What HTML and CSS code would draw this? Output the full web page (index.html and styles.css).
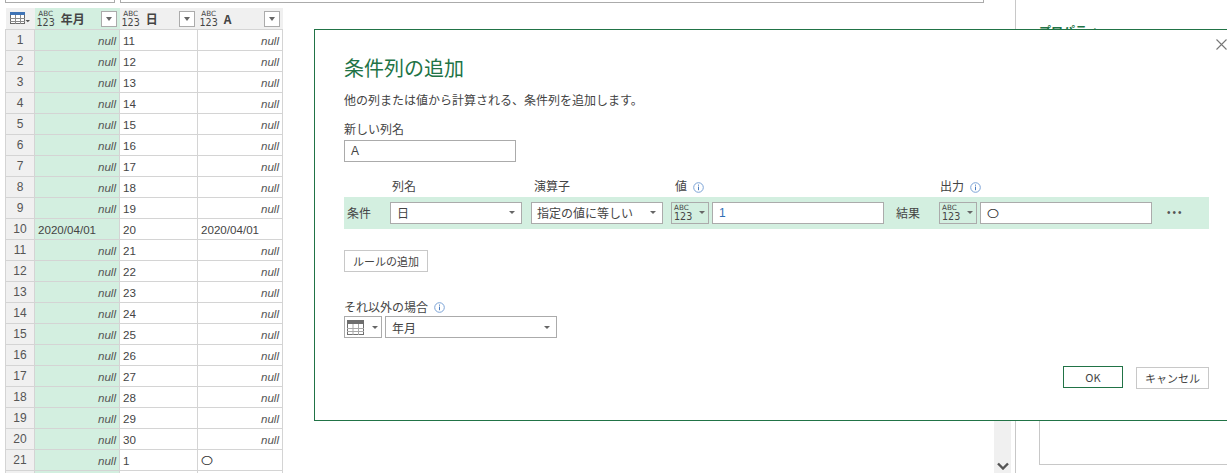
FILE: index.html
```html
<!DOCTYPE html>
<html lang="ja">
<head>
<meta charset="utf-8">
<title>条件列の追加</title>
<link rel="stylesheet" href="styles.css">
</head>
<body>
<div class="app">
  <main class="main">
    <div class="topbar"><div class="box name"></div><div class="box formula"></div></div>
    <div class="content">
      <table class="grid">
        <thead>
          <tr>
            <th class="corner"><svg width="20" height="12" viewBox="0 0 20 12"><rect x="0.5" y="0.5" width="14" height="11" fill="#fff" stroke="#6a6a6a"/><rect x="0" y="0" width="15" height="3" fill="#3f73b5"/><path d="M0 6.5h15M0 9.5h15M5.5 3v9M10.5 3v9" stroke="#8a8a8a" fill="none"/><path d="M15.5 8h4.5l-2.2 2.2z" fill="#555"/></svg></th>
            <th class="c1"><div class="head"><span class="type"><b>ABC</b><b>123</b></span><span class="hname">年月</span><span class="filter"><i></i></span></div></th>
            <th class="c2"><div class="head"><span class="type"><b>ABC</b><b>123</b></span><span class="hname">日</span><span class="filter"><i></i></span></div></th>
            <th class="c3"><div class="head"><span class="type"><b>ABC</b><b>123</b></span><span class="hname">A</span><span class="filter"><i></i></span></div></th>
          </tr>
        </thead>
        <tbody>
          <tr><th>1</th><td class="g n">null</td><td>11</td><td class="n">null</td></tr>
          <tr><th>2</th><td class="g n">null</td><td>12</td><td class="n">null</td></tr>
          <tr><th>3</th><td class="g n">null</td><td>13</td><td class="n">null</td></tr>
          <tr><th>4</th><td class="g n">null</td><td>14</td><td class="n">null</td></tr>
          <tr><th>5</th><td class="g n">null</td><td>15</td><td class="n">null</td></tr>
          <tr><th>6</th><td class="g n">null</td><td>16</td><td class="n">null</td></tr>
          <tr><th>7</th><td class="g n">null</td><td>17</td><td class="n">null</td></tr>
          <tr><th>8</th><td class="g n">null</td><td>18</td><td class="n">null</td></tr>
          <tr><th>9</th><td class="g n">null</td><td>19</td><td class="n">null</td></tr>
          <tr><th>10</th><td class="g">2020/04/01</td><td>20</td><td>2020/04/01</td></tr>
          <tr><th>11</th><td class="g n">null</td><td>21</td><td class="n">null</td></tr>
          <tr><th>12</th><td class="g n">null</td><td>22</td><td class="n">null</td></tr>
          <tr><th>13</th><td class="g n">null</td><td>23</td><td class="n">null</td></tr>
          <tr><th>14</th><td class="g n">null</td><td>24</td><td class="n">null</td></tr>
          <tr><th>15</th><td class="g n">null</td><td>25</td><td class="n">null</td></tr>
          <tr><th>16</th><td class="g n">null</td><td>26</td><td class="n">null</td></tr>
          <tr><th>17</th><td class="g n">null</td><td>27</td><td class="n">null</td></tr>
          <tr><th>18</th><td class="g n">null</td><td>28</td><td class="n">null</td></tr>
          <tr><th>19</th><td class="g n">null</td><td>29</td><td class="n">null</td></tr>
          <tr><th>20</th><td class="g n">null</td><td>30</td><td class="n">null</td></tr>
          <tr><th>21</th><td class="g n">null</td><td>1</td><td><span class="oval">〇</span></td></tr>
          <tr><th></th><td class="g"></td><td></td><td></td></tr>
        </tbody>
      </table>
      <div class="scroll"><svg width="12" height="8" viewBox="0 0 12 8"><path d="M1 1.5l5 5 5-5" fill="none" stroke="#555" stroke-width="2.4"/></svg></div>
    </div>
  </main>
  <aside class="pane">
    <div class="panetitle">プロパティ</div>
    <div class="panebox"></div>
  </aside>
</div>

<section class="dialog">
  <svg class="close" width="11" height="11" viewBox="0 0 11 11"><path d="M.5.5l10 10M10.5.5l-10 10" stroke="#777" stroke-width="1.1" fill="none"/></svg>
  <h1>条件列の追加</h1>
  <p class="desc">他の列または値から計算される、条件列を追加します。</p>
  <label class="lbl">新しい列名</label>
  <div class="field newname"><span class="accent">A</span></div>
  <div class="rulehead">
    <span class="h-col">列名</span>
    <span class="h-op">演算子</span>
    <span class="h-val">値<svg class="info" width="11" height="11" viewBox="0 0 11 11"><circle cx="5.5" cy="5.5" r="4.8" fill="none" stroke="#7ba3d6"/><path d="M5.5 4.6v3.6M5.5 2.6v1.1" stroke="#4a7cbf" fill="none"/></svg></span>
    <span class="h-out">出力<svg class="info" width="11" height="11" viewBox="0 0 11 11"><circle cx="5.5" cy="5.5" r="4.8" fill="none" stroke="#7ba3d6"/><path d="M5.5 4.6v3.6M5.5 2.6v1.1" stroke="#4a7cbf" fill="none"/></svg></span>
  </div>
  <div class="rule">
    <span class="cond">条件</span>
    <div class="field sel colsel">日<i class="arrow"></i></div>
    <div class="field sel opsel">指定の値に等しい<i class="arrow"></i></div>
    <div class="field typesel"><span class="type"><b>ABC</b><b>123</b></span><i class="arrow"></i></div>
    <div class="field val"><span class="blue">1</span></div>
    <span class="result">結果</span>
    <div class="field typesel"><span class="type"><b>ABC</b><b>123</b></span><i class="arrow"></i></div>
    <div class="field out"><span class="oval">〇</span></div>
    <span class="more">•••</span>
  </div>
  <button class="btn add" type="button">ルールの追加</button>
  <label class="lbl else">それ以外の場合<svg class="info" width="11" height="11" viewBox="0 0 11 11"><circle cx="5.5" cy="5.5" r="4.8" fill="none" stroke="#7ba3d6"/><path d="M5.5 4.6v3.6M5.5 2.6v1.1" stroke="#4a7cbf" fill="none"/></svg></label>
  <div class="elserow">
    <div class="field tablesel"><svg width="17" height="15" viewBox="0 0 17 15"><rect x="0.5" y="0.5" width="16" height="14" fill="#fff" stroke="#6e6e6e"/><rect x="0" y="0" width="17" height="4" fill="#6e6e6e"/><path d="M0 8.5h17M0 11.5h17M6 4v11M11.5 4v11" stroke="#a8a8a8" fill="none"/></svg><i class="arrow"></i></div>
    <div class="field sel elsesel">年月<i class="arrow"></i></div>
  </div>
  <div class="actions">
    <button class="btn ok" type="button">OK</button>
    <button class="btn cancel" type="button">キャンセル</button>
  </div>
</section>
</body>
</html>
```
FILE: styles.css
```css
* { box-sizing: border-box; }
html, body { margin: 0; height: 100%; overflow: hidden; background: #fff; }
body { font-family: "Noto Sans CJK JP", "Noto Sans", sans-serif; font-size: 12px; color: #444; }

.app { display: flex; width: 1227px; height: 473px; overflow: hidden; }
.main { width: 1016px; flex: none; border-right: 1px solid #c8c8c8; }
.topbar { display: flex; gap: 5px; height: 8px; padding-left: 5px; }
.box { height: 3px; border: 1px solid #ababab; border-top: 0; }
.name { width: 110px; }
.formula { width: 864px; }
.content { display: flex; height: 465px; }

.grid { border-collapse: collapse; table-layout: fixed; width: 277px; height: 462px; margin-left: 5px; flex: none; font-family: "Liberation Sans", "Noto Sans CJK JP", sans-serif; font-size: 11.6px; color: #444; }
.grid th, .grid td { height: 21px; padding: 0 3px; border: 1px solid #d4d4d4; overflow: hidden; white-space: nowrap; }
.grid thead th { height: 21px; background: #f0f0f0; border: 0; padding: 0; }
.grid tbody th { background: #f0f0f0; font-family: "Liberation Sans", sans-serif; font-size: 12px; font-weight: 400; color: #555; text-align: center; padding: 0; }
.corner { width: 29px; }
.c1 { width: 85px; }
.c2 { width: 78px; }
.c3 { width: 85px; }
.grid thead .c1 { background: #d3efe0; }
.g { background: #d3efe0; }
.n { text-align: right; font-style: italic; color: #555; }
.oval { display: inline-block; transform: scaleY(.72); font-family: "Noto Sans CJK JP", sans-serif; font-size: 12px; line-height: 12px; color: #333; }

.head { display: flex; align-items: center; height: 21px; padding: 0 1px 0 2px; }
.type { display: inline-flex; flex-direction: column; flex: none; line-height: 8.5px; font-family: "DejaVu Sans", sans-serif; color: #444; }
.type b { font-weight: 400; }
.type b:first-child { font-size: 7.2px; }
.type b:last-child { font-size: 9.6px; }
.hname { flex: 1; margin-left: 6px; text-align: left; font-family: "Noto Sans CJK JP", sans-serif; font-size: 12px; font-weight: 700; color: #444; }
.filter { display: flex; align-items: center; justify-content: center; width: 16px; height: 16px; margin-right: 2px; background: #fff; border: 1px solid #ababab; }
.filter i { width: 0; height: 0; border: 3.5px solid transparent; border-top: 4px solid #666; border-bottom: 0; }

.scroll { margin: 413px 4px 0 auto; width: 17px; height: 52px; display: flex; align-items: flex-end; justify-content: center; padding-bottom: 3px; background: #f0f0f0; }

.pane { flex: 1; padding: 0 0 8px 23px; display: flex; flex-direction: column; justify-content: space-between; }
.panetitle { margin-top: 26px; height: 10px; line-height: 10px; font-size: 12px; font-weight: 700; color: #217346; }
.panebox { width: 100%; height: 60px; border: 1px solid #c8c8c8; border-right: 0; }

.dialog { position: absolute; left: 314px; top: 29px; width: 913px; height: 392px; padding: 23px 18px 0 29px; background: #fff; border: 1px solid #217346; border-right: 0; display: flex; flex-direction: column; align-items: flex-start; }
.close { position: absolute; top: 9px; right: 0; }
.dialog h1 { margin: 0; height: 29px; font-size: 20px; line-height: 29px; font-weight: 400; color: #217346; }
.desc { margin: 9px 0 0; height: 18px; line-height: 18px; font-size: 12px; color: #444; }
.lbl { display: block; height: 17px; line-height: 17px; margin-top: 11px; font-size: 12px; color: #444; }
.field { height: 22px; display: flex; align-items: center; flex: none; background: #fff; border: 1px solid #ababab; padding: 0 6px; font-size: 12px; color: #444; position: relative; }
.newname { width: 172px; margin-top: 3px; }
.accent { color: #444; font-family: "Liberation Sans", sans-serif; }
.blue { color: #2f6fb5; font-family: "Liberation Sans", sans-serif; }

.rulehead { display: flex; height: 18px; margin-top: 15px; line-height: 18px; width: 100%; }
.rulehead span { display: flex; align-items: center; flex: none; }
.h-col { margin-left: 48px; width: 142px; }
.h-op { width: 141px; }
.h-val { width: 265px; }
.info { margin-left: 6px; margin-top: 2px; flex: none; }

.rule { display: flex; align-items: center; width: 865px; height: 32px; margin-top: 2px; padding-bottom: 1px; background: #d3efe0; }
.cond { width: 46px; padding-left: 3px; flex: none; }
.sel { justify-content: space-between; }
.arrow { display: block; flex: none; width: 0; height: 0; border: 3px solid transparent; border-top: 3px solid #666; border-bottom: 0; }
.colsel { width: 132px; }
.opsel { width: 132px; margin-left: 9px; padding-left: 5px; }
.opsel + .typesel { margin-left: 8px; }
.typesel { width: 38px; padding: 0 3px 0 2px; justify-content: space-between; background: #d3efe0; }
.val { width: 172px; margin-left: 3px; }
.result { width: 43px; margin-left: 12px; flex: none; }
.out { width: 172px; margin-left: 3px; }
.more { margin-left: 15px; font-size: 10px; letter-spacing: 2px; font-family: "Liberation Sans", sans-serif; color: #555; }

.btn { display: block; height: 22px; background: #fff; border: 1px solid #c8c8c8; padding: 0; font: inherit; font-size: 11px; color: #444; cursor: pointer; }
.add { width: 84px; margin-top: 21px; }
.else { margin-top: 26px; display: flex; align-items: center; }
.elserow { display: flex; gap: 3px; margin-top: 1px; }
.tablesel { width: 38px; padding: 0 3px 0 2px; justify-content: space-between; }
.elsesel { width: 172px; }
.actions { display: flex; align-items: flex-start; gap: 13px; align-self: flex-end; margin-top: 28px; }
.ok { width: 60px; border-color: #217346; }
.cancel { width: 73px; margin-top: 1px; }
```
